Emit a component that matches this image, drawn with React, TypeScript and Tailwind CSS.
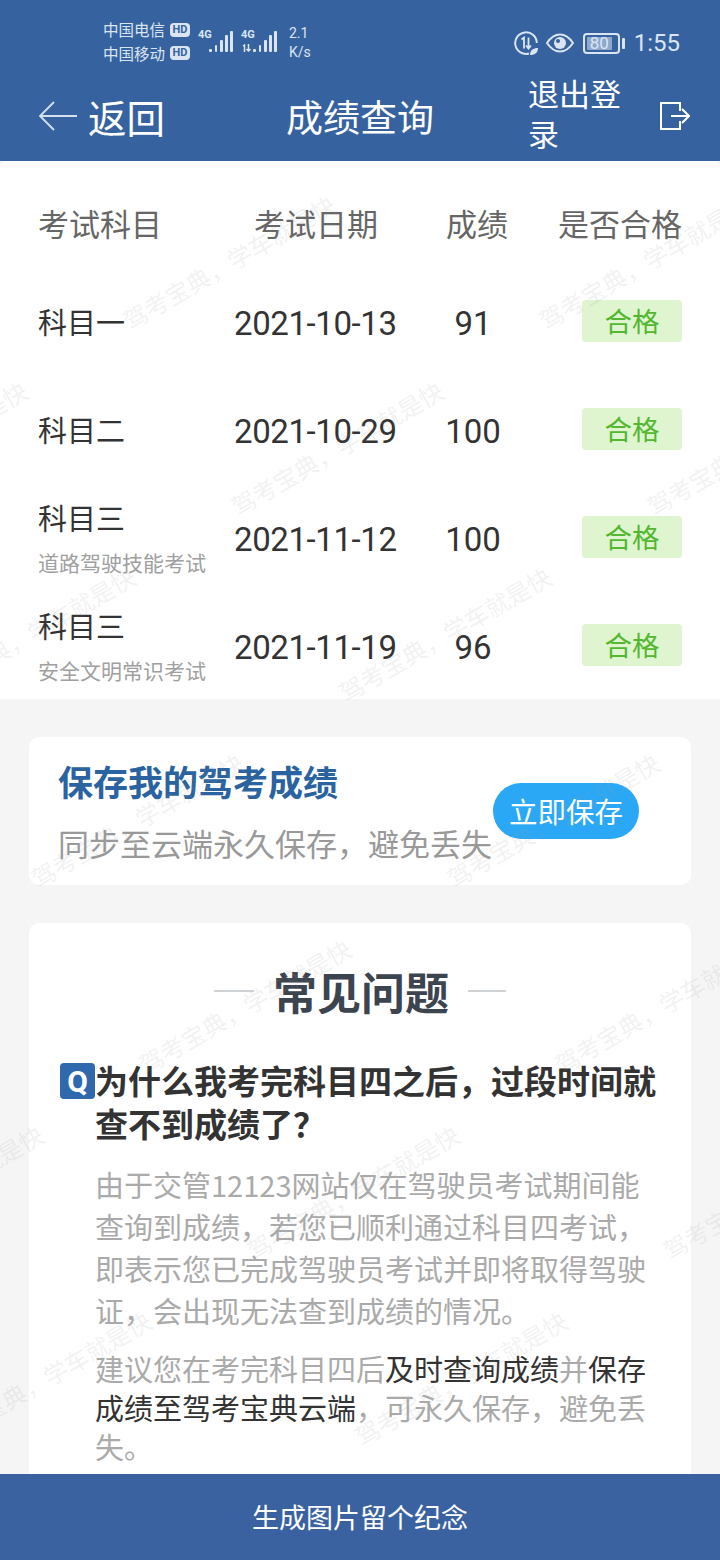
const font = { fontFamily: '"Noto Sans CJK SC", Roboto, sans-serif' };

const marks = (() => {
  const out: { x: number; y: number }[] = [];
  for (let r = -1; r < 8; r++) {
    for (let c = -2; c < 3; c++) {
      out.push({ x: 125 + r * 108 + c * 416, y: 322 + r * 186 });
    }
  }
  return out;
})();

function Watermarks() {
  return (
    <div className="absolute inset-0 overflow-hidden pointer-events-none">
      {marks.map((m, i) => (
        <span
          key={i}
          className="absolute whitespace-nowrap text-[24px] leading-none text-[#9a9a9a]/15 origin-left -rotate-[30deg]"
          style={{ left: m.x, top: m.y - 12 }}
        >
          驾考宝典，学车就是快
        </span>
      ))}
    </div>
  );
}

function SignalBars({ h }: { h: number[] }) {
  return (
    <div className="flex items-end gap-[2.400px] h-[22px]">
      {h.map((v, i) => (
        <span key={i} className="w-[2.800px] rounded-[1px] bg-[#dbe5f2]" style={{ height: v }} />
      ))}
    </div>
  );
}

function Hd() {
  return (
    <span className="w-[20px] h-[14px] bg-[#dbe5f2] text-[#36639f] rounded-[4px] text-[11px] font-bold leading-[14px] text-center font-[Roboto]">
      HD
    </span>
  );
}

function StatusBar() {
  return (
    <div className="h-[80px] flex items-center text-[#dbe5f2] pt-[6px]">
      <div className="ml-[103px] w-[88px] -mt-[3px] flex flex-col text-[15.500px] leading-[23.500px] whitespace-nowrap">
        <div className="flex items-center gap-[5px]">
          <span>中国电信</span>
          <Hd />
        </div>
        <div className="flex items-center gap-[5px]">
          <span>中国移动</span>
          <Hd />
        </div>
      </div>
      <div className="ml-[7px] -mt-[6px] relative w-[35px] h-[24px] flex items-end justify-end">
        <span className="absolute left-0 top-0 text-[11px] font-bold leading-[13px] font-[Roboto]">4G</span>
        <SignalBars h={[3, 7, 12, 17, 21]} />
      </div>
      <div className="ml-[8px] -mt-[6px] relative w-[36px] h-[24px] flex items-end justify-end">
        <span className="absolute left-0 top-0 text-[11px] font-bold leading-[13px] font-[Roboto]">4G</span>
        <svg className="absolute left-[1px] bottom-0" width="10" height="8" viewBox="0 0 10 8" fill="none" stroke="#dbe5f2" strokeWidth="1.500">
          <path d="M1 2l1.500-1v7M6.500 0v7M4.500 5l2 2 2-2" />
        </svg>
        <SignalBars h={[3, 7, 12, 17, 21]} />
      </div>
      <div className="ml-[12px] flex flex-col text-[14px] leading-[19px] font-[Roboto]">
        <span>2.1</span>
        <span>K/s</span>
      </div>
      <div className="ml-auto mr-[40px] flex items-center">
        <svg width="24" height="24" viewBox="0 0 24 24" fill="none" stroke="#dbe5f2" strokeWidth="2">
          <path d="M15 22.500A10.800 10.800 0 1 1 22.800 12" />
          <path d="M7.500 8.500l2.500-2v11M14.500 6.500v11m-2.500-3l2.500 3 2.500-3" strokeWidth="1.800" />
          <path d="M16 24c0-4.500 3-7 8-7 0 4.500-3 7-8 7z" fill="#dbe5f2" stroke="none" />
        </svg>
        <svg className="ml-[8px]" width="28" height="20" viewBox="0 0 28 20" fill="none">
          <path d="M1 10C5 4 9 1.500 14 1.500S23 4 27 10c-4 6-8 8.500-13 8.500S5 16 1 10z" stroke="#dbe5f2" strokeWidth="2" />
          <circle cx="14" cy="10" r="6" fill="#dbe5f2" />
          <circle cx="12" cy="8" r="2" fill="#36639f" />
        </svg>
        <div className="ml-[9px] w-[37px] h-[21px] rounded-[4px] border-2 border-[#dbe5f2] p-[2px] flex">
          <span className="w-[25px] bg-[#8ea9cc] rounded-[1px] text-[17px] leading-[13px] text-center font-[Roboto]">80</span>
        </div>
        <span className="ml-[2px] w-[3px] h-[11px] rounded-[1px] bg-[#dbe5f2]" />
        <span className="ml-[9px] text-[24px] leading-none font-[Roboto]">1:55</span>
      </div>
    </div>
  );
}

function NavBar() {
  return (
    <div className="h-[72px] flex items-center text-white">
      <svg className="ml-[38px] shrink-0" width="40" height="32" viewBox="0 0 40 32" fill="none" stroke="#d5e0ef" strokeWidth="1.800">
        <path d="M39 16H2M16 2L2 16l14 14" />
      </svg>
      <span className="ml-[10px] text-[38.500px] leading-none w-[76px] whitespace-nowrap">返回</span>
      <span className="ml-[122px] text-[37px] leading-none w-[148px] whitespace-nowrap">成绩查询</span>
      <span className="ml-[94px] w-[100px] text-[31px] leading-[40px] -mt-[6px]">退出登录</span>
      <svg className="ml-[32px] shrink-0" width="30" height="28" viewBox="0 0 30 28" fill="none" stroke="white" strokeWidth="2">
        <path d="M20 9V1H1v26h19v-8M11 14h18M22 7l7 7-7 7" />
      </svg>
    </div>
  );
}

const rows = [
  { a: "科目一", d: "2021-10-13", s: "91" },
  { a: "科目二", d: "2021-10-29", s: "100" },
  { a: "科目三", sub: "道路驾驶技能考试", d: "2021-11-12", s: "100" },
  { a: "科目三", sub: "安全文明常识考试", d: "2021-11-19", s: "96" },
];

function Table() {
  return (
    <div className="bg-white h-[538px] pl-[38px] rounded-t-[6px]">
      <div className="h-[108px] pt-[16px] flex items-center text-[31px] text-[#666]">
        <span className="w-[196px] whitespace-nowrap">考试科目</span>
        <span className="ml-[20px] w-[192px] whitespace-nowrap">考试日期</span>
        <span className="w-[112px] whitespace-nowrap">成绩</span>
        <span className="whitespace-nowrap">是否合格</span>
      </div>
      {rows.map((r, i) => (
        <div key={i} className="h-[108px] flex items-center">
          <div className={r.sub ? "w-[196px] flex flex-col -mt-[15px]" : "w-[196px] flex flex-col -mt-[4px]"}>
            <span className="text-[29px] leading-[40px] text-[#333]">{r.a}</span>
            {r.sub && <span className="text-[21px] leading-[30px] mt-[10px] -mb-[10px] text-[#a0a0a0] whitespace-nowrap">{r.sub}</span>}
          </div>
          <span className="w-[190px] pt-[2px] text-[33px] tracking-[-0.400px] text-[#333] font-[Roboto] whitespace-nowrap">{r.d}</span>
          <span className="w-[98px] pt-[2px] text-[33px] text-[#333] font-[Roboto] text-center">{r.s}</span>
          <span className="ml-[60px] -mt-[4px] w-[100px] h-[42px] rounded-[4px] bg-[#dff5d0] text-[#52b830] text-[27.500px] leading-[40px] text-center">合格</span>
        </div>
      ))}
    </div>
  );
}

function SaveCard() {
  return (
    <div className="mx-[29px] mt-[38px] h-[148px] bg-white rounded-[10px] pl-[29px] relative">
      <div className="pt-[22px] text-[35px] leading-[44px] font-bold text-[#2a639f]">保存我的驾考成绩</div>
      <div className="mt-[19px] text-[31px] leading-[42px] text-[#999] whitespace-nowrap">同步至云端永久保存，避免丢失</div>
      <div className="absolute left-[464px] top-[46px] w-[146px] h-[56px] rounded-full bg-[#2aa8f6] text-white text-[28.500px] leading-[56px] text-center">立即保存</div>
    </div>
  );
}

function Faq() {
  return (
    <div className="mx-[29px] mt-[38px] bg-white rounded-t-[10px] h-[600px]">
      <div className="pt-[38px] flex items-center justify-center">
        <span className="w-[40px] h-[2px] bg-[#d0d3d6]" />
        <span className="mx-[19px] text-[44px] leading-[60px] font-bold text-[#3c4450]">常见问题</span>
        <span className="w-[38px] h-[2px] bg-[#d0d3d6]" />
      </div>
      <div className="mt-[32px] pl-[31px] flex">
        <span className="mt-[10px] w-[35px] h-[36px] rounded-[4px] bg-[#2f68ad] text-white text-[30px] leading-[38px] font-bold text-center font-[Roboto] shrink-0">Q</span>
        <div className="pt-[6px] text-[33px] leading-[43px] font-bold text-[#333] w-[566px]">为什么我考完科目四之后，过段时间就查不到成绩了？</div>
      </div>
      <div className="ml-[66px] mr-[40px] mt-[18px] text-[29px] leading-[42px] text-[#aaa]">
        由于交管12123网站仅在驾驶员考试期间能查询到成绩，若您已顺利通过科目四考试，即表示您已完成驾驶员考试并即将取得驾驶证，会出现无法查到成绩的情况。
      </div>
      <div className="ml-[66px] mr-[40px] mt-[18px] text-[29px] leading-[39px] text-[#aaa]">
        建议您在考完科目四后<span className="text-[#333]">及时查询成绩</span>并<span className="text-[#333]">保存成绩至驾考宝典云端</span>，可永久保存，避免丢失。
      </div>
    </div>
  );
}

export default function App() {
  return (
    <div className="relative w-[720px] h-[1560px] overflow-hidden bg-[#f5f5f5] flex flex-col" style={font}>
      <div className="relative z-10 bg-[#36639f] shrink-0 h-[161px]">
        <StatusBar />
        <NavBar />
      </div>
      <div className="relative flex-1 overflow-hidden">
        <Table />
        <SaveCard />
        <Faq />
        <div className="absolute inset-0 -top-[161px] pointer-events-none">
          <Watermarks />
        </div>
      </div>
      <div className="relative z-10 h-[86px] shrink-0 bg-[#3a62a0] text-white text-[27px] leading-[86px] text-center">生成图片留个纪念</div>
    </div>
  );
}
